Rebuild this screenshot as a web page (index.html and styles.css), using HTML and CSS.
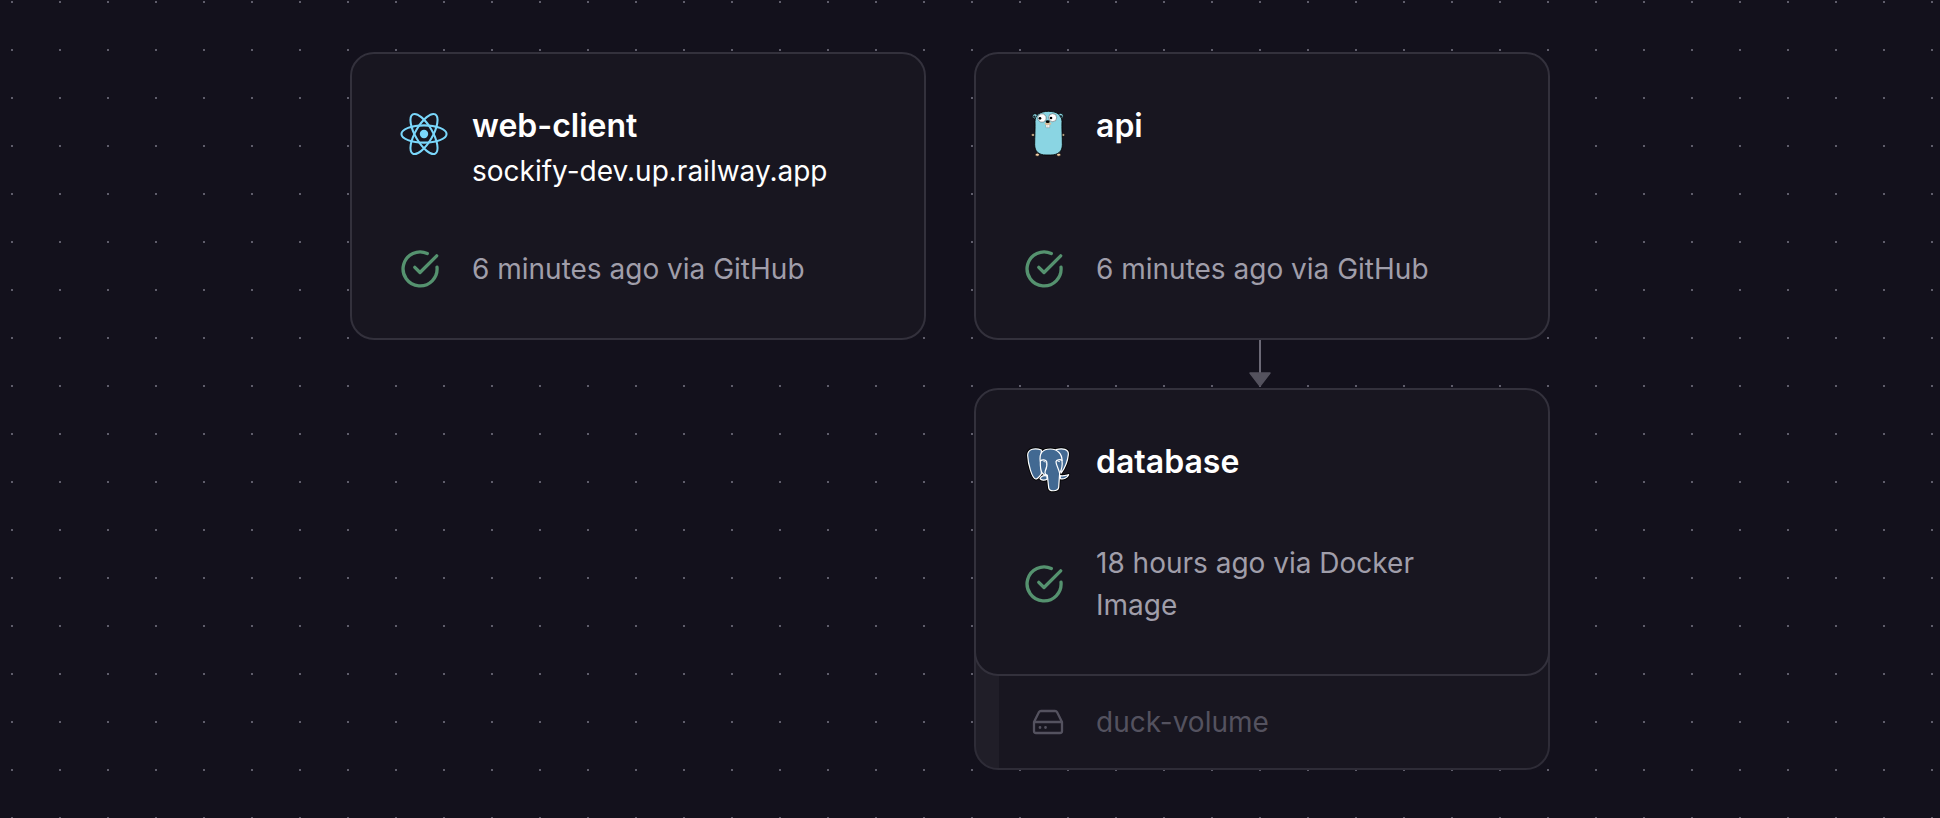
FILE: index.html
```html
<!DOCTYPE html>
<html lang="en">
<head>
<meta charset="utf-8">
<title>Project canvas</title>
<link rel="stylesheet" href="styles.css">
</head>
<body>
<svg width="0" height="0" class="defs" aria-hidden="true">
  <symbol id="check" viewBox="0 0 40 40">
    <path d="M27.3 4.5A17 17 0 1 0 37 18.2M14.8 18.3l5.2 5.2L36.7 6.8" fill="none" stroke="#55926f" stroke-width="3.3" stroke-linecap="round" stroke-linejoin="round"/>
  </symbol>
</svg>
<main class="canvas">
  <article class="card">
    <header class="head">
      <svg class="logo" viewBox="-11.7 -11.7 23.4 23.4">
        <circle r="2.05" fill="#7ad7fb"/>
        <g fill="none" stroke="#7ad7fb">
          <ellipse rx="11" ry="4.2"/>
          <ellipse rx="11" ry="4.2" transform="rotate(60)"/>
          <ellipse rx="11" ry="4.2" transform="rotate(120)"/>
        </g>
      </svg>
      <div>
        <h2 class="title">web-client</h2>
        <p class="domain">sockify-dev.up.railway.app</p>
      </div>
    </header>
    <footer class="status">
      <svg class="check"><use href="#check"/></svg>
      <p class="text">6 minutes ago via GitHub</p>
    </footer>
  </article>

  <section class="stack">
    <article class="card">
      <header class="head">
        <svg class="logo" viewBox="42 60 144 144">
          <g fill="#f0cda5" stroke="#000" stroke-width="1.5">
            <ellipse cx="69" cy="135" rx="5" ry="3.5"/>
            <ellipse cx="159" cy="135" rx="5" ry="3.5"/>
            <ellipse cx="82" cy="194" rx="6" ry="4.5"/>
            <ellipse cx="146" cy="194" rx="6" ry="4.5"/>
          </g>
          <g fill="#8ad5e3" stroke="#000" stroke-width="2.5">
            <circle cx="75" cy="79" r="8"/>
            <circle cx="152" cy="78" r="8"/>
            <path d="M75 95C75 74 91 64 115 64S155 73 156 94C155 112 157 140 157 164C157 184 145 195 121 195H108C86 195 74 184 74 164C74 140 76 113 75 95Z"/>
          </g>
          <circle cx="73" cy="80" r="3.500" fill="#16232a"/>
          <circle cx="153" cy="79" r="3.500" fill="#16232a"/>
          <g fill="#fff" stroke="#222" stroke-width="1.2">
            <circle cx="96" cy="84" r="12.500"/>
            <circle cx="128" cy="83" r="12"/>
            <path d="M108 103h11v10h-11z" stroke-width=".6"/>
          </g>
          <circle cx="90" cy="85" r="4"/>
          <circle cx="123" cy="84" r="4"/>
          <ellipse cx="114" cy="101" rx="10" ry="4" fill="#d9bf9c"/>
          <ellipse cx="113" cy="95" rx="6" ry="4"/>
          <path d="M113.500 105v8" stroke="#777"/>
        </svg>
        <div>
          <h2 class="title">api</h2>
        </div>
      </header>
      <footer class="status">
        <svg class="check"><use href="#check"/></svg>
        <p class="text">6 minutes ago via GitHub</p>
      </footer>
    </article>

    <svg class="arrow" viewBox="0 0 24 48">
      <path d="M12 0v33" stroke="#6c6a77" stroke-width="2"/>
      <path d="M2 33h20L12 46z" fill="#54525e" stroke="#54525e" stroke-width="1.5" stroke-linejoin="round"/>
    </svg>

    <article class="card front">
      <header class="head">
        <svg class="logo" viewBox="42 48 144 144">
          <g stroke-linejoin="round" stroke-linecap="round">
            <g fill="#426992" stroke="#000" stroke-width="9">
              <path d="M94 60C76 53 53 56 53 76C54 102 66 145 77 147C84 147 89 138 94 132Z"/>
              <path d="M138 59C158 53 177 58 175 74C173 94 163 116 154 129Z"/>
              <path d="M90 146C93 137 103 135 111 138V148C104 152 94 151 90 146ZM151 137C160 139 168 136 176 134C172 144 160 149 151 146Z"/>
              <path d="M91 95C87 70 97 57 121 57C142 57 156 72 156 91C158 106 155 119 149 130L146 172C144 185 117 186 116 173L112 136C99 136 90 129 91 95Z"/>
            </g>
            <g fill="#426992" stroke="#fff" stroke-width="3.6">
              <path d="M94 60C76 53 53 56 53 76C54 102 66 145 77 147C84 147 89 138 94 132Z"/>
              <path d="M138 59C158 53 177 58 175 74C173 94 163 116 154 129Z"/>
              <path d="M90 146C93 137 103 135 111 138V148C104 152 94 151 90 146ZM151 137C160 139 168 136 176 134C172 144 160 149 151 146Z"/>
              <path d="M91 95C87 70 97 57 121 57C142 57 156 72 156 91C158 106 155 119 149 130L146 172C144 185 117 186 116 173L112 136C99 136 90 129 91 95Z"/>
              <path fill="none" d="M91 93C96 88 108 88 110 95C112 106 110 115 106 122C103 130 107 135 112 136M156 91C150 87 139 90 138 95C138 105 146 116 149 130"/>
              <path fill="none" stroke-width="2.5" d="M101 94l5 2M144 94l5 1"/>
            </g>
          </g>
        </svg>
        <div>
          <h2 class="title">database</h2>
        </div>
      </header>
      <footer class="status">
        <svg class="check"><use href="#check"/></svg>
        <p class="text">18 hours ago via Docker Image</p>
      </footer>
    </article>

    <aside class="volume">
      <svg class="disk" viewBox="0 0 32 26" fill="none" stroke="#54525f" stroke-width="2.3" stroke-linejoin="round" stroke-linecap="round">
        <path d="M2 13v9q0 2 2 2h24q2 0 2-2v-9L25 3q-.6-1-2-1H9Q7.600 2 7 3zM2 13h28"/>
        <path d="M8 18.500h.01M13.500 18.500h.01" stroke-width="2.800"/>
      </svg>
      <span class="volume-name">duck-volume</span>
    </aside>
  </section>
</main>
</body>
</html>
```
FILE: styles.css
```css
* { box-sizing: border-box; }

body {
  margin: 0;
  background: #13111c;
  font-family: Inter, "Liberation Sans", sans-serif;
}

h2, p { margin: 0; }

.defs { position: absolute; }

.canvas {
  display: flex;
  align-items: flex-start;
  gap: 48px;
  height: 818px;
  padding: 52px 0 0 350px;
  overflow: hidden;
  background: conic-gradient(from 90deg at 46px 46px, #5f5d6b 90deg, transparent 0) -35px -45px / 48px 48px;
}

.stack {
  display: flex;
  flex-direction: column;
}

.card {
  display: flex;
  flex-direction: column;
  justify-content: space-between;
  width: 576px;
  height: 288px;
  padding: 50px 48px 48px;
  border: 2px solid #33313c;
  border-radius: 24px;
  background: #181620;
}

.front {
  position: relative;
  z-index: 1;
}

.head {
  display: flex;
  gap: 24px;
}

.logo {
  flex: none;
  width: 48px;
  height: 48px;
  margin-top: 6px;
}

.title {
  color: #fff;
  font-size: 32px;
  font-weight: 600;
  line-height: 44px;
}

.domain {
  color: #fff;
  font-size: 28px;
  line-height: 46px;
}

.status {
  display: flex;
  align-items: center;
  gap: 32px;
}

.check {
  flex: none;
  width: 40px;
  height: 40px;
}

.text {
  max-width: 350px;
  color: #a09eaa;
  font-size: 28px;
  line-height: 42px;
}

.arrow {
  width: 24px;
  height: 48px;
  margin-left: 274px;
}

.volume {
  display: flex;
  align-items: center;
  gap: 32px;
  width: 576px;
  height: 142px;
  margin-top: -48px;
  padding: 46px 0 0 56px;
  border: 2px solid #2e2c37;
  border-radius: 24px;
  background: linear-gradient(90deg, #201e28 23px, #181620 23px);
}

.disk {
  width: 32px;
  height: 26px;
}

.volume-name {
  color: #54525f;
  font-size: 28px;
  line-height: 42px;
}
```
